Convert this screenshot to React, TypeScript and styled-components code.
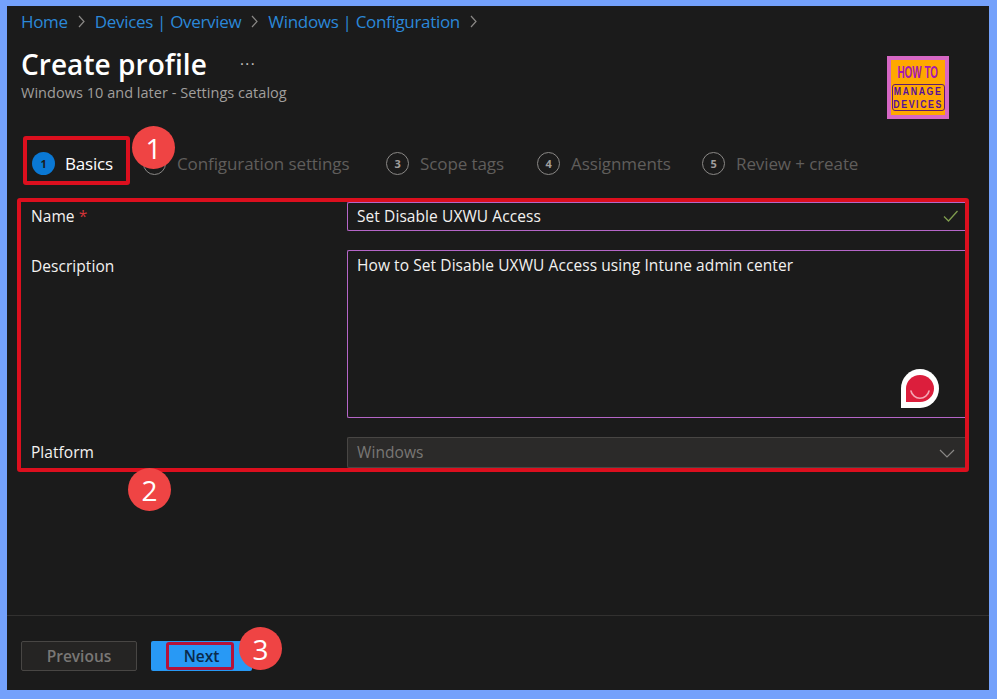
import { Fragment } from "react";
import styled, { createGlobalStyle } from "styled-components";

const GlobalStyle = createGlobalStyle`
  html, body {
    margin: 0;
    padding: 0;
    background: #74a1fb;
  }
  * {
    box-sizing: border-box;
  }
`;

const Frame = styled.div`
  width: 997px;
  height: 699px;
  padding: 6px 8px 9px 7px;
  background: #74a1fb;
  font-family: "Open Sans", "Noto Sans", sans-serif;
`;

const Panel = styled.div`
  position: relative;
  height: 100%;
  display: flex;
  flex-direction: column;
  background: #1b1b1b;
`;

const Breadcrumb = styled.nav`
  display: flex;
  align-items: center;
  height: 31px;
  padding-left: 14px;
  font-size: 17px;
  letter-spacing: -0.32px;
  color: #2b88d8;
`;

const Crumb = styled.span`
  white-space: nowrap;
`;

const Chevron = styled.svg`
  width: 7px;
  height: 13px;
  margin: 0 10px;
  fill: none;
  stroke: #8a8886;
  stroke-width: 1.2;
`;

const Header = styled.header`
  display: flex;
  justify-content: space-between;
  height: 84px;
  padding: 8px 40px 0 14px;
`;

const TitleRow = styled.div`
  display: flex;
  align-items: center;
  gap: 33px;
`;

const Title = styled.h1`
  margin: 0;
  font-size: 28px;
  line-height: 38px;
  font-weight: 600;
  letter-spacing: 0.05px;
  color: #ffffff;
`;

const More = styled.span`
  margin-top: -2px;
  font-size: 15px;
  letter-spacing: 1.5px;
  color: #c8c6c4;
`;

const Subtitle = styled.div`
  font-size: 14.5px;
  line-height: 20px;
  letter-spacing: 0.03px;
  color: #a19f9d;
`;

const Logo = styled.div`
  width: 62px;
  height: 63px;
  margin-top: 11px;
  display: flex;
  flex-direction: column;
  align-items: center;
  background: #ffa800;
  border: 4px solid #d667c4;
  font-family: "Liberation Sans", sans-serif;
  font-weight: 700;
`;

const LogoTop = styled.div`
  margin-top: 4px;
  font-size: 16px;
  line-height: 17px;
  color: #a516b4;
  white-space: nowrap;
  transform: scaleX(0.62);
`;

const LogoBox = styled.div`
  width: 53px;
  height: 27px;
  margin-top: 3px;
  display: flex;
  justify-content: center;
  border: 1px solid #5f1a6e;
  border-radius: 3px;
`;

const LogoLines = styled.div`
  flex: none;
  font-size: 11px;
  line-height: 12.7px;
  text-align: center;
  letter-spacing: 2px;
  color: #54109c;
  white-space: nowrap;
  transform: scaleX(0.8);
`;

const Steps = styled.div`
  display: flex;
  align-items: center;
  height: 46px;
  margin-top: 19px;
  padding-left: 25px;
`;

const Step = styled.div<{ $width: number }>`
  display: flex;
  align-items: center;
  gap: 11px;
  width: ${(p) => p.$width}px;
  font-size: 17px;
  letter-spacing: -0.1px;
  color: #605e5c;
  white-space: nowrap;
`;

const StepNumber = styled.span`
  flex: none;
  width: 23px;
  height: 23px;
  display: flex;
  align-items: center;
  justify-content: center;
  border: 1px solid #8a8886;
  border-radius: 50%;
  font-size: 11px;
  font-weight: 700;
  color: #a19f9d;
`;

const ActiveStep = styled(Step)`
  gap: 10px;
  font-weight: 500;
  letter-spacing: -0.2px;
  color: #ffffff;
`;

const ActiveNumber = styled(StepNumber)`
  border: none;
  background: #0a78d4;
  color: #1b1b1b;
`;

const Highlight = styled.div`
  position: absolute;
  border: 4px solid #dc0f1e;
  border-radius: 3px;
`;

const BasicsHighlight = styled(Highlight)`
  left: 16px;
  top: 130px;
  width: 107px;
  height: 49px;
`;

const NextHighlight = styled(Highlight)`
  left: 159px;
  top: 636px;
  width: 68px;
  height: 28px;
  border-width: 3px;
  border-color: #b5123a;
`;

const Callout = styled.div<{ $left: number; $top: number }>`
  position: absolute;
  left: ${(p) => p.$left}px;
  top: ${(p) => p.$top}px;
  width: 43px;
  height: 43px;
  display: flex;
  align-items: center;
  justify-content: center;
  border-radius: 50%;
  background: #ef4444;
  font-size: 28px;
  color: #ffffff;
`;

const Form = styled.section`
  width: 952px;
  height: 274px;
  margin: 12px 0 0 10px;
  padding-left: 10px;
  border: 4px solid #dc0f1e;
  border-radius: 3px;
  display: grid;
  grid-template-columns: 316px 618px;
  grid-template-rows: 29px 168px 31px;
  row-gap: 19px;
`;

const Label = styled.label<{ $top: number }>`
  padding-top: ${(p) => p.$top}px;
  font-size: 15.5px;
  line-height: 20px;
  letter-spacing: 0.05px;
  color: #f3f2f1;
`;

const Required = styled.span`
  color: #d13438;
`;

const InputBox = styled.div`
  position: relative;
  padding: 3px 9px 0;
  border: 1px solid #b566c8;
  border-right: none;
  border-radius: 2px 0 0 2px;
  font-size: 15.5px;
  line-height: 20px;
  letter-spacing: 0.08px;
  color: #f3f2f1;
`;

const CheckIcon = styled.svg`
  position: absolute;
  right: 7px;
  top: 7px;
  width: 15px;
  height: 12px;
  fill: none;
  stroke: #7f9c4e;
  stroke-width: 1.3;
`;

const TextBox = styled(InputBox)`
  padding-top: 4px;
`;

const Bubble = styled.svg`
  position: absolute;
  right: 26px;
  bottom: 9px;
  width: 38px;
  height: 39px;
`;

const SelectBox = styled.div`
  position: relative;
  padding: 4px 9px 0;
  background: #2b2a29;
  border: 1px solid #484644;
  border-right: none;
  border-radius: 2px 0 0 2px;
  font-size: 15.5px;
  line-height: 20px;
  letter-spacing: 0.08px;
  color: #797775;
`;

const SelectChevron = styled.svg`
  position: absolute;
  right: 10px;
  top: 11px;
  width: 16px;
  height: 9px;
  fill: none;
  stroke: #8a8886;
  stroke-width: 1.2;
`;

const Footer = styled.footer`
  display: flex;
  align-items: flex-start;
  gap: 14px;
  margin-top: auto;
  height: 75px;
  padding: 25px 0 0 14px;
  border-top: 1px solid #323130;
`;

const PreviousButton = styled.button`
  width: 116px;
  height: 30px;
  padding: 0;
  background: #252423;
  border: 1px solid #484644;
  border-radius: 2px;
  font: 600 15.5px "Open Sans", sans-serif;
  color: #797775;
`;

const NextButton = styled.button`
  width: 101px;
  height: 30px;
  padding: 0;
  background: #2899f5;
  border: none;
  border-radius: 2px;
  font: 600 15.5px "Open Sans", sans-serif;
  color: #0b2a4a;
`;

const crumbs = ["Home", "Devices | Overview", "Windows | Configuration"];

const steps = [
  { n: 3, label: "Scope tags", width: 151 },
  { n: 4, label: "Assignments", width: 165 },
  { n: 5, label: "Review + create", width: 170 },
];

export default function App() {
  return (
    <Frame>
      <GlobalStyle />
      <Panel>
        <Breadcrumb>
          {crumbs.map((c) => (
            <Fragment key={c}>
              <Crumb>{c}</Crumb>
              <Chevron viewBox="0 0 7 13">
                <path d="M1 1 L6 6.5 L1 12" />
              </Chevron>
            </Fragment>
          ))}
        </Breadcrumb>
        <Header>
          <div>
            <TitleRow>
              <Title>Create profile</Title>
              <More>···</More>
            </TitleRow>
            <Subtitle>Windows 10 and later - Settings catalog</Subtitle>
          </div>
          <Logo>
            <LogoTop>HOW TO</LogoTop>
            <LogoBox>
              <LogoLines>
                MANAGE
                <br />
                DEVICES
              </LogoLines>
            </LogoBox>
          </Logo>
        </Header>
        <Steps>
          <ActiveStep $width={111}>
            <ActiveNumber>1</ActiveNumber>
            Basics
          </ActiveStep>
          <Step $width={243}>
            <StepNumber />
            Configuration settings
          </Step>
          {steps.map((s) => (
            <Step key={s.n} $width={s.width}>
              <StepNumber>{s.n}</StepNumber>
              {s.label}
            </Step>
          ))}
        </Steps>
        <Form>
          <Label $top={4}>
            Name <Required>*</Required>
          </Label>
          <InputBox>
            Set Disable UXWU Access
            <CheckIcon viewBox="0 0 15 12">
              <path d="M1 6.5 L5.5 11 L14.5 1" />
            </CheckIcon>
          </InputBox>
          <Label $top={6}>Description</Label>
          <TextBox>
            How to Set Disable UXWU Access using Intune admin center
            <Bubble viewBox="0 0 38 39">
              <path d="M0 39 V19.5 A19 19.5 0 1 1 19 39 Z" fill="#ffffff" />
              <path d="M5 33 V19.5 A14 13.5 0 1 1 19 33 Z" fill="#dc1e3c" />
              <path
                d="M10 22 A9.2 9.2 0 0 0 28 22"
                fill="none"
                stroke="#f4a6b4"
                strokeWidth="1.6"
                strokeLinecap="round"
              />
            </Bubble>
          </TextBox>
          <Label $top={5}>Platform</Label>
          <SelectBox>
            Windows
            <SelectChevron viewBox="0 0 16 9">
              <path d="M1 1 L8 8 L15 1" />
            </SelectChevron>
          </SelectBox>
        </Form>
        <Footer>
          <PreviousButton>Previous</PreviousButton>
          <NextButton>Next</NextButton>
        </Footer>
        <BasicsHighlight />
        <NextHighlight />
        <Callout $left={125} $top={120}>1</Callout>
        <Callout $left={121} $top={462}>2</Callout>
        <Callout $left={232} $top={621}>3</Callout>
      </Panel>
    </Frame>
  );
}
